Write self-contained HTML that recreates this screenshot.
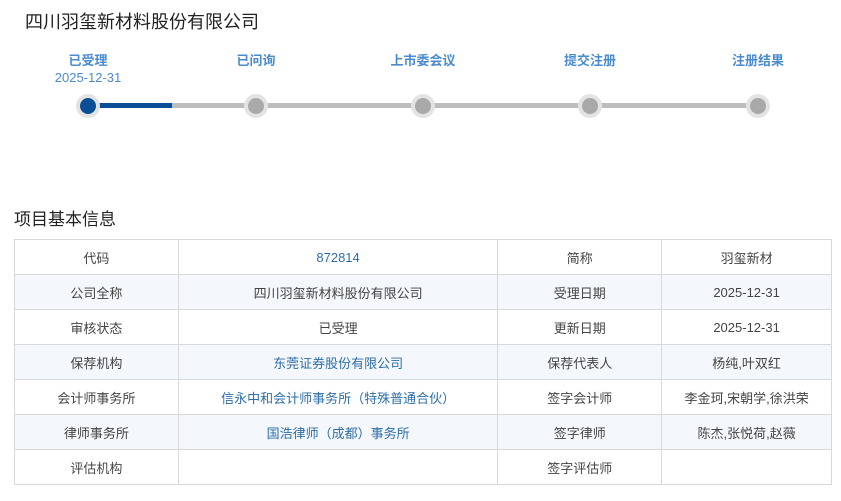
<!DOCTYPE html>
<html><head><meta charset="utf-8"><style>
body{margin:0;width:841px;height:501px;background:#fff;font-family:"Liberation Sans","Noto Sans CJK SC",sans-serif;position:relative;overflow:hidden}
.t{position:absolute;left:25px;top:8px;font-size:18px;color:#222}
.lab{position:absolute;top:50px;width:120px;margin-left:-60px;text-align:center;font-size:13px;font-weight:bold;color:#4a8bd0}
.d{position:absolute;top:70px;left:28px;width:120px;text-align:center;font-size:13px;color:#4a8bd0}
.line{position:absolute;top:103px;left:88px;width:670px;height:5px;background:#bdbdbd}
.blue{position:absolute;top:103px;left:88px;width:84px;height:5px;background:#0a4f96}
.c{position:absolute;top:94px;width:24px;height:24px;margin-left:-12px;border-radius:50%;background:#e3e3e3}
.c i{position:absolute;left:4px;top:4px;width:16px;height:16px;border-radius:50%;background:#a9a9a9}
.s{position:absolute;left:14px;top:205px;font-size:17px;color:#222}
table{position:absolute;left:14px;top:239px;border-collapse:collapse;width:818px;font-size:13px;color:#444}
td{border:1px solid #d8d8d8;height:34px;padding:0;text-align:center}
tr:nth-child(even) td{background:#f4f7fb}
.b{color:#2e6ea8}
</style></head><body>
<div class="t">四川羽玺新材料股份有限公司</div>
<div class="lab" style="left:88px">已受理</div>
<div class="lab" style="left:256px">已问询</div>
<div class="lab" style="left:423px">上市委会议</div>
<div class="lab" style="left:590px">提交注册</div>
<div class="lab" style="left:758px">注册结果</div>
<div class="d">2025-12-31</div>
<div class="line"></div><div class="blue"></div>
<div class="c" style="left:88px"><i style="background:#0a4f96"></i></div>
<div class="c" style="left:256px"><i></i></div>
<div class="c" style="left:423px"><i></i></div>
<div class="c" style="left:590px"><i></i></div>
<div class="c" style="left:758px"><i></i></div>
<div class="s">项目基本信息</div>
<table>
<colgroup><col style="width:164px"><col style="width:320px"><col style="width:164px"><col style="width:170px"></colgroup>
<tr><td>代码</td><td class="b">872814</td><td>简称</td><td>羽玺新材</td></tr>
<tr><td>公司全称</td><td>四川羽玺新材料股份有限公司</td><td>受理日期</td><td>2025-12-31</td></tr>
<tr><td>审核状态</td><td>已受理</td><td>更新日期</td><td>2025-12-31</td></tr>
<tr><td>保荐机构</td><td class="b">东莞证券股份有限公司</td><td>保荐代表人</td><td>杨纯,叶双红</td></tr>
<tr><td>会计师事务所</td><td class="b">信永中和会计师事务所（特殊普通合伙）</td><td>签字会计师</td><td>李金珂,宋朝学,徐洪荣</td></tr>
<tr><td>律师事务所</td><td class="b">国浩律师（成都）事务所</td><td>签字律师</td><td>陈杰,张悦荷,赵薇</td></tr>
<tr><td>评估机构</td><td></td><td>签字评估师</td><td></td></tr>
</table>
</body></html>
